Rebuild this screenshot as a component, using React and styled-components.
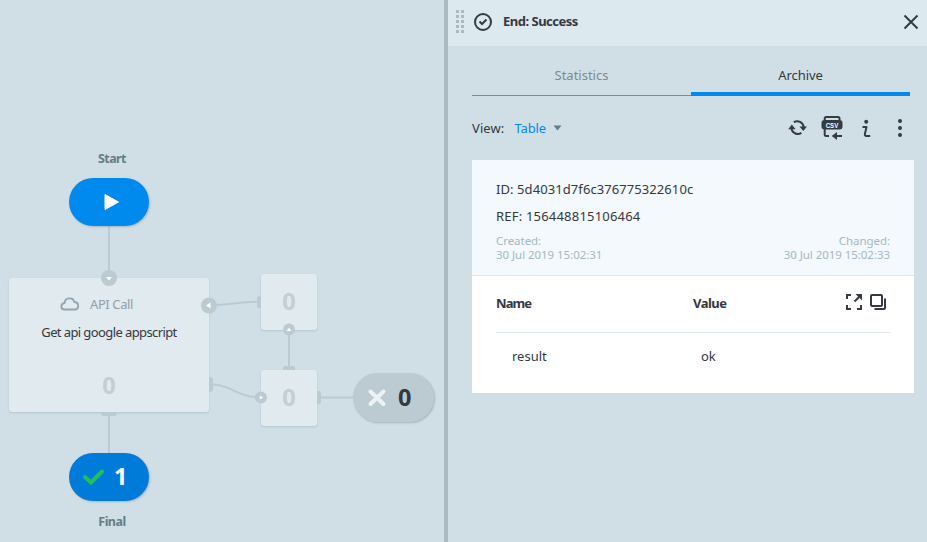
import React from "react";
import styled, { createGlobalStyle } from "styled-components";

const Global = createGlobalStyle`
  *{box-sizing:border-box}
  body{margin:0;background:#d0dfe6;font-family:"Noto Sans","Open Sans",sans-serif;font-size:13px;color:#34383f;overflow:hidden}
`;
const Page = styled.div`display:flex;width:927px;height:542px;overflow:hidden;`;
const Canvas = styled.main`position:relative;flex:0 0 444px;background:#d0dfe6;`;
const Text = styled.span`
  display:inline-block;white-space:nowrap;
  font-size:${p => p.$size || 13}px;line-height:${p => p.$lh || 18}px;
  font-weight:${p => p.$weight || 400};color:${p => p.$color || "#34383f"};
  letter-spacing:${p => p.$track || 0}px;
`;
const Number = styled(Text).attrs({ $size: 23.5, $lh: 30, $weight: 700 })`padding-bottom:2px;`;
const Wires = styled.svg`position:absolute;inset:0;`;
const Label = styled.div`
  position:absolute;left:72px;top:${p => p.$y}px;width:80px;text-align:center;
`;
const Pill = styled.div`
  position:absolute;left:${p => p.$x}px;top:${p => p.$y}px;
  width:${p => p.$w || 80}px;height:${p => p.$h || 48}px;border-radius:25px;
  background:${p => p.$bg};box-shadow:1px 1px 2px rgba(70,90,105,.3);
  display:flex;align-items:center;
`;
const Card = styled.div`
  position:absolute;left:${p => p.$x}px;top:${p => p.$y}px;width:${p => p.$w}px;height:${p => p.$h}px;
  background:#e1eaef;border-radius:3px;box-shadow:0 1px 2px rgba(110,140,155,.3);
  display:flex;flex-direction:column;align-items:center;justify-content:center;
`;
const CardHead = styled.div`display:flex;align-items:center;gap:10px;height:18px;margin-right:25px;`;
const ApiCard = styled(Card)`justify-content:flex-start;padding-top:17px;`;
const Title = styled.div`margin-top:10px;height:18px;`;
const Count = styled.div`margin-top:29px;`;
const Ports = styled.svg`position:absolute;inset:0;`;

const Panel = styled.aside`flex:1;border-left:4px solid #aabac3;background:#d0dfe6;`;
const Header = styled.header`
  height:46px;background:#dce9ef;display:flex;align-items:center;padding:0 8px;
`;
const Grip = styled.div`
  display:grid;grid-template-columns:3px 3px;grid-auto-rows:3px;gap:2px;margin-bottom:3px;
  i{background:#aabac3;}
`;
const HeaderTitle = styled.div`margin-left:10px;flex:1;height:22px;`;
const HeadIcon = styled.div`margin-left:9px;height:22px;`;
const Svg = styled.svg`display:block;`;
const CloseIcon = styled(Svg)`margin-bottom:2px;`;
const Tabs = styled.nav`margin:0 17px 0 24px;height:50px;display:flex;`;
const Tab = styled.div`
  flex:1;text-align:center;padding-top:20px;
  border-bottom:${p => (p.$on ? "4px solid #008aed" : "1px solid #7b8f98")};
`;
const Toolbar = styled.div`height:64px;margin:0 13px 0 24px;display:flex;align-items:center;`;
const ViewSelect = styled.div`display:flex;align-items:center;gap:7px;margin-left:10px;`;
const Actions = styled.div`margin-left:auto;display:flex;align-items:center;gap:14px;height:32px;padding-right:12px;`;
const CsvText = styled.text`font:700 8px "Liberation Sans",sans-serif;fill:#fff;`;
const Record = styled.section`width:442px;height:233px;margin-left:24px;background:#fff;`;
const Meta = styled.div`
  height:116px;background:#f3f9fc;border-bottom:1px solid #dce6eb;padding:20px 24px 0;
`;
const Line = styled.div`height:27px;`;
const Dates = styled.div`display:flex;justify-content:space-between;`;
const DateBox = styled.div`
  display:flex;flex-direction:column;align-items:${p => (p.$end ? "flex-end" : "flex-start")};
`;
const HeadRow = styled.div`
  margin:0 24px;height:57px;display:grid;grid-template-columns:197px 1fr auto;align-items:center;
  border-bottom:1px solid #dce6eb;padding-bottom:2px;
`;
const Row = styled.div`margin:0 24px;padding-left:16px;height:46px;display:grid;grid-template-columns:189px 1fr;align-items:center;`;
const Tools = styled.div`display:flex;gap:8px;margin:0 4px 2px 0;`;

const ink = "#353b43";
const Stamp = styled(Text).attrs({ $size: 11.5, $lh: 14, $color: "#a5b8c1", $track: -0.05 })``;

export default function App() {
  return (
    <>
      <Global />
      <Page>
        <Canvas>
          <Wires width="444" height="542" fill="none" stroke="#bccad1" strokeWidth="2">
            <path d="M109 225V278M109 414V454M289 330V368M318 397.500H354" />
            <path d="M210 305C230 305 238 301.700 260 301.700M212 384.500C232 384.500 236 397.500 262 397.500" />
          </Wires>
          <Label $y={149}><Text $size={12.5} $weight={700} $color="#647d87" $track={-0.6}>Start</Text></Label>
          <Pill $x={69} $y={178} $bg="#008aed">
            <Svg width="80" height="48"><path d="M36 16.500V31.500L49.500 24Z" fill="#fff" stroke="#fff" strokeLinejoin="round" /></Svg>
          </Pill>
          <ApiCard $x={9} $y={278} $w={200} $h={134}>
            <CardHead>
              <Svg width="20" height="16" fill="none" stroke="#93a4ae" strokeWidth="1.900" strokeLinejoin="round">
                <path d="M4.500 13.500C0.400 13.500 0.200 7.600 4.600 7C5 1.200 13.200 .8 14.300 6C19.500 6.200 19.300 13.500 15 13.500Z" />
              </Svg>
              <Text $color="#93a0a9" $track={-0.4}>API Call</Text>
            </CardHead>
            <Title><Text $track={-0.6}>Get api google appscript</Text></Title>
            <Count><Number $color="#c4ced3">0</Number></Count>
          </ApiCard>
          <Card $x={261} $y={274} $w={56} $h={56}><Number $color="#c4ced3">0</Number></Card>
          <Card $x={261} $y={370} $w={56} $h={56}><Number $color="#c4ced3">0</Number></Card>
          <Ports width="444" height="542" fill="#bccad1">
            <path d="M101 412H117V413Q117 416 114 416H104Q101 416 101 413ZM209 377H210Q213 377 213 380V389Q213 392 210 392H209ZM261 296V308H259Q257 308 257 306V298Q257 296 259 296ZM283 370V368Q283 366 285 366H293Q295 366 295 368V370ZM317 391H319Q321 391 321 393V402Q321 404 319 404H317Z" />
            <circle cx="109" cy="278" r="8" /><circle cx="209" cy="305.500" r="8" />
            <circle cx="289" cy="329.500" r="6" /><circle cx="261" cy="397.500" r="6" />
            <g fill="#fff">
              <path d="M106 277H112L109 280.500ZM206 305.500L210.500 302.500V308.500ZM286.500 331H291.500L289 327.800ZM259.800 395.500V399.500L263 397.500Z" />
            </g>
          </Ports>
          <Pill $x={353} $y={373} $w={81} $h={49} $bg="#bccad1">
            <Svg width="45" height="49"><path d="M17.500 18.500L30.500 31M30.500 18.500L17.500 31" stroke="#edf3f5" strokeWidth="4" strokeLinecap="round" /></Svg>
            <Number>0</Number>
          </Pill>
          <Pill $x={69} $y={453} $bg="#007bd9">
            <Svg width="45" height="48"><path d="M16 24L22 29.500L33 18.500" fill="none" stroke="#1fc15b" strokeWidth="4" strokeLinecap="round" /></Svg>
            <Number $color="#fff">1</Number>
          </Pill>
          <Label $y={512}><Text $size={12.5} $weight={700} $color="#647d87" $track={-0.5}>Final</Text></Label>
        </Canvas>
        <Panel>
          <Header>
            <Grip>{Array.from({ length: 10 }, (_, i) => <i key={i} />)}</Grip>
            <HeadIcon>
              <Svg width="20" height="20" fill="none" stroke={ink} strokeWidth="2"><circle cx="10" cy="10" r="8" /><path d="M6.500 9.500L9 12L13.500 7.500" /></Svg>
            </HeadIcon>
            <HeaderTitle><Text $weight={700} $track={-0.5}>End: Success</Text></HeaderTitle>
            <CloseIcon width="16" height="16" stroke={ink} strokeWidth="2"><path d="M1.500 1.500L14.500 14.500M14.500 1.500L1.500 14.500" /></CloseIcon>
          </Header>
          <Tabs>
            <Tab><Text $color="#7b8b92" $track={0}>Statistics</Text></Tab>
            <Tab $on><Text $track={-0.1}>Archive</Text></Tab>
          </Tabs>
          <Toolbar>
            <Text $track={0.1}>View:</Text>
            <ViewSelect>
              <Text $color="#008aed" $track={-0.1}>Table</Text>
              <Svg width="9" height="8"><path d="M.5 1.500H8.500L4.500 6.500Z" fill="#647d87" /></Svg>
            </ViewSelect>
            <Actions>
              <Svg width="20" height="20" viewBox="787 118 20 20" fill="none" stroke={ink} strokeWidth="2" overflow="visible">
                <path d="M793.800 122.200A6.500 6.500 0 0 1 803.700 127M801.400 132.900A6.500 6.500 0 0 1 791.500 129" />
                <path d="M788.200 129.300L791.800 124.500L795.600 129.300ZM799.500 126.500H807L803.300 131Z" fill={ink} stroke="none" />
              </Svg>
              <Svg width="22" height="26" viewBox="821 115 22 26" fill="none" stroke={ink} strokeWidth="2">
                <path d="M824.700 120V118.500Q824.700 117 826.200 117H838Q839.500 117 839.500 118.500V120M824.700 129V134.500Q824.700 136 826.200 136H829M835 136H842" />
                <rect x="821.500" y="120" width="21" height="9.500" rx="3" fill={ink} stroke="none" />
                <path d="M831.700 136L837 132V140Z" fill={ink} stroke="none" />
                <g stroke="none"><CsvText x="825.700" y="127.700" textLength="12.500" lengthAdjust="spacingAndGlyphs">CSV</CsvText></g>
              </Svg>
              <Svg width="27" height="20" viewBox="857 118 27 20" fill="none" stroke={ink} strokeWidth="2">
                <circle cx="866.200" cy="121.800" r="2" fill={ink} stroke="none" />
                <path d="M862.500 127H866.500L864.900 134Q864.500 136 866.300 136H870.200" strokeLinejoin="round" />
              </Svg>
              <Svg width="4" height="20" viewBox="889 118 4 20" fill={ink}>
                <circle cx="891" cy="121" r="2" /><circle cx="891" cy="128" r="2" /><circle cx="891" cy="135" r="2" />
              </Svg>
            </Actions>
          </Toolbar>
          <Record>
            <Meta>
              <Line><Text $track={0.08}>ID: 5d4031d7f6c376775322610c</Text></Line>
              <Line><Text $track={0.2}>REF: 156448815106464</Text></Line>
              <Dates>
                <DateBox>
                  <Stamp>Created:</Stamp>
                  <Stamp>30 Jul 2019 15:02:31</Stamp>
                </DateBox>
                <DateBox $end>
                  <Stamp>Changed:</Stamp>
                  <Stamp>30 Jul 2019 15:02:33</Stamp>
                </DateBox>
              </Dates>
            </Meta>
            <HeadRow>
              <Text $weight={700} $track={-0.9}>Name</Text>
              <Text $weight={700} $track={-0.5}>Value</Text>
              <Tools>
                <Svg width="16" height="16" fill="none" stroke={ink} strokeWidth="2">
                  <path d="M1 5V1H5M1 11V15H5M11 15H15V11M8.500 7.500L13 3" />
                  <path d="M9.500 0H16V6.500L13.800 4.300L11.700 2.200Z" fill={ink} stroke="none" />
                </Svg>
                <Svg width="16" height="16" fill="none" stroke={ink} strokeWidth="2">
                  <rect x="1" y="1" width="11" height="11" rx="1" /><path d="M15 4.500V14Q15 15 14 15H4.500" />
                </Svg>
              </Tools>
            </HeadRow>
            <Row><Text>result</Text><Text>ok</Text></Row>
          </Record>
        </Panel>
      </Page>
    </>
  );
}
